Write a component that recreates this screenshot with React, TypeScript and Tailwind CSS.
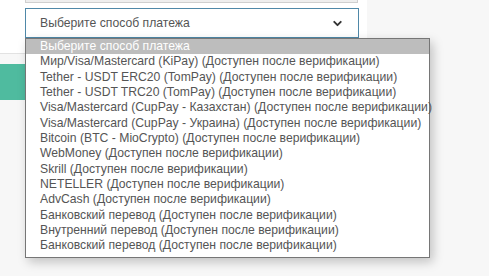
import { ChevronDown } from "lucide-react";

const options = [
  "Мир/Visa/Mastercard (KiPay) (Доступен после верификации)",
  "Tether - USDT ERC20 (TomPay) (Доступен после верификации)",
  "Tether - USDT TRC20 (TomPay) (Доступен после верификации)",
  "Visa/Mastercard (CupPay - Казахстан) (Доступен после верификации)",
  "Visa/Mastercard (CupPay - Украина) (Доступен после верификации)",
  "Bitcoin (BTC - MioCrypto) (Доступен после верификации)",
  "WebMoney (Доступен после верификации)",
  "Skrill (Доступен после верификации)",
  "NETELLER (Доступен после верификации)",
  "AdvCash (Доступен после верификации)",
  "Банковский перевод (Доступен после верификации)",
  "Внутренний перевод (Доступен после верификации)",
  "Банковский перевод (Доступен после верификации)",
];

export default function App() {
  return (
    <div
      className="relative h-[276px] w-[489px] overflow-hidden bg-[#f7f7f7] text-[12.2px] text-[#555]"
      style={{ fontFamily: '"Liberation Sans", Arial, sans-serif' }}
    >
      {/* form card */}
      <div className="w-[367px] h-[54px] bg-white border-b border-[#e2e2e2]">
        <div className="mx-[25px] w-[333px] h-[3px] bg-[#eeeeee] border-x border-b border-[#cfcfcf]" />
        <div className="mx-[25px] mt-[5px] flex h-[30px] w-[334px] items-center justify-between border border-[#4f88a8] px-[14px]">
          <span>Выберите способ платежа</span>
          <ChevronDown className="h-[13px] w-[13px] text-[#333]" strokeWidth={3.5} />
        </div>
      </div>

      {/* button behind list */}
      <div className="mt-[10px] h-[36px] w-[120px] bg-[#4fbb9f]" />

      {/* open list */}
      <div className="absolute left-[25px] top-[38px] w-[405px] border border-[#767676] bg-white pb-[3px] shadow-[3px_4px_10px_rgba(0,0,0,0.22)]">
        <div className="bg-[#bdbdbd] px-[14px] leading-[15.33px] text-white">Выберите способ платежа</div>
        {options.map((o, i) => (
          <div key={i} className="px-[14px] leading-[15.33px] whitespace-nowrap">
            {o}
          </div>
        ))}
      </div>
    </div>
  );
}
